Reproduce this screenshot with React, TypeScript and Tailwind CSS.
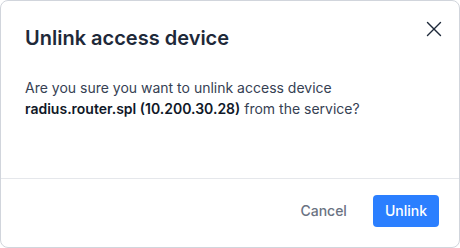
import { X } from "lucide-react";

export default function App() {
  return (
    <div className="w-[460px] h-[248px] bg-white font-['Inter',sans-serif]">
      <div className="flex h-full flex-col rounded-lg border border-gray-300 bg-white">
        <div className="flex items-start justify-between pl-6 pr-3 pt-[23px]">
          <h2 className="text-xl leading-7 font-semibold text-gray-800">Unlink access device</h2>
          <button className="-mt-2 text-gray-800">
            <X size={26} strokeWidth={1.3} />
          </button>
        </div>
        <div className="flex-1 px-6 pt-[25px] text-sm leading-[21px] text-gray-700">
          Are you sure you want to unlink access device{" "}
          <span className="font-semibold text-gray-900">radius.router.spl (10.200.30.28)</span> from the
          service?
        </div>
        <div className="flex items-center justify-end gap-2.5 border-t border-gray-200 px-5 pt-4 pb-5">
          <button className="h-8 px-4 text-sm font-medium text-gray-500">Cancel</button>
          <button className="h-8 rounded bg-blue-500 px-3 text-sm font-medium text-white">Unlink</button>
        </div>
      </div>
    </div>
  );
}
